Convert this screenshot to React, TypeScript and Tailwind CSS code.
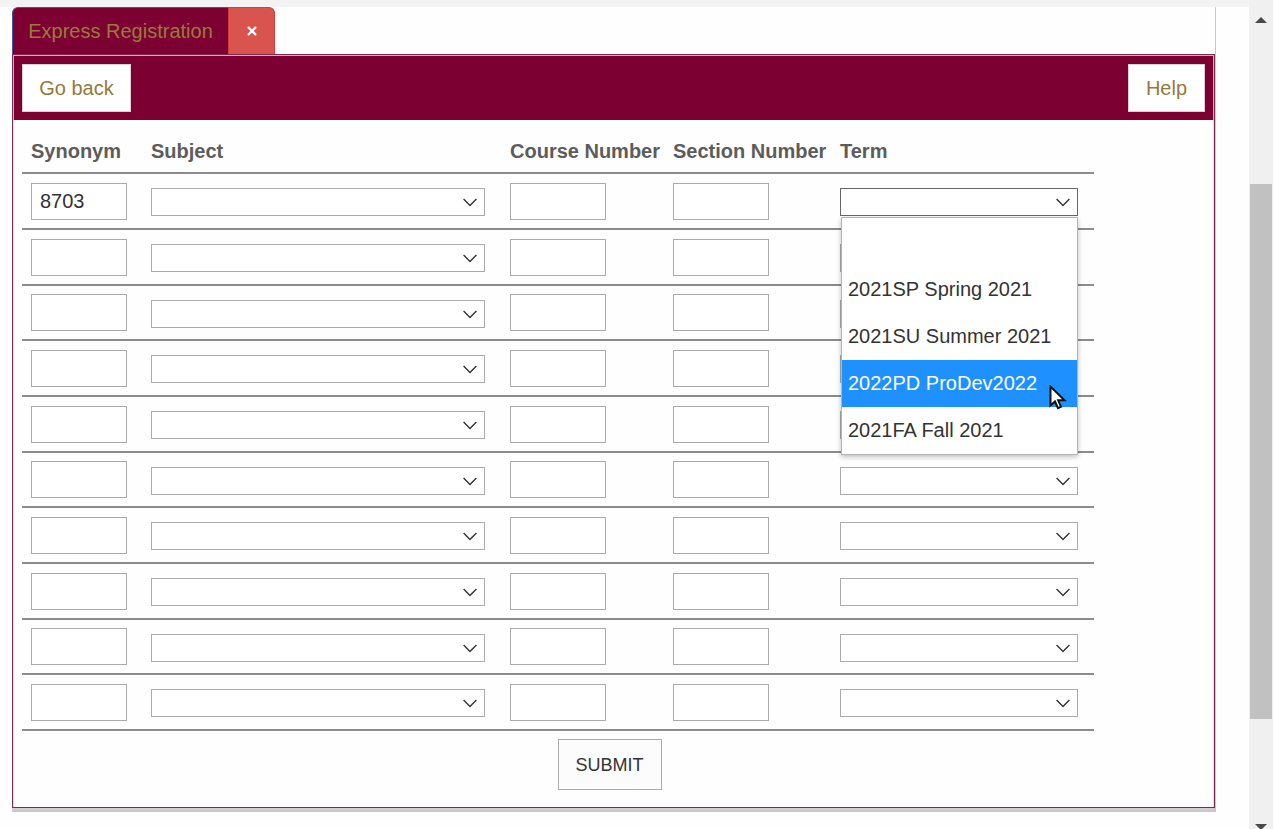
import type { ReactNode } from "react";

const terms = ["", "2021SP Spring 2021", "2021SU Summer 2021", "2022PD ProDev2022", "2021FA Fall 2021"];
const highlighted = 3;
const rows = Array.from({ length: 10 }, (_, i) => i + 1);

function TextBox({ label, value = "" }: { label: string; value?: string }) {
  return (
    <input
      type="text"
      aria-label={label}
      defaultValue={value}
      className="block h-[37px] w-24 border border-[#ababab] bg-white px-2 text-xl text-[#333] outline-none"
    />
  );
}

function DropDown({ label, open = false, options = [""], children }: { label: string; open?: boolean; options?: string[]; children?: ReactNode }) {
  return (
    <div className="relative">
      <select
        aria-label={label}
        className={`block h-7 w-full appearance-none border bg-white px-2 text-base leading-none outline-none ${open ? "border-[#666]" : "border-[#ababab]"}`}
      >
        {options.map((o) => (
          <option key={o}>{o}</option>
        ))}
      </select>
      <svg viewBox="0 0 14 9" className="pointer-events-none absolute top-[10px] right-2 h-[9px] w-[14px]" fill="none" stroke="#333" strokeWidth="1.4">
        <path d="M0.6 1 L7 7.6 L13.4 1" />
      </svg>
      {children}
    </div>
  );
}

function TermMenu() {
  return (
    <ul
      role="listbox"
      aria-label="Terms"
      className="absolute top-[29px] right-0 left-px z-10 grid h-[238px] grid-rows-5 border border-[#b4b4b4] bg-white text-xl text-[#333] shadow-[0_2px_5px_rgba(0,0,0,0.25)]"
    >
      {terms.map((t, i) => (
        <li
          key={t}
          role="option"
          aria-selected={i === highlighted}
          className={`relative flex items-center px-[6px] whitespace-nowrap ${i === highlighted ? "bg-[#1e90ff] text-white" : ""}`}
        >
          {t}
          {i === highlighted && (
            <svg viewBox="0 0 18 25" className="absolute top-[25px] right-[10px] h-[25px] w-[18px]">
              <path d="M1.5 1.5 V20.5 L6 16.5 L9 23.2 L12 21.8 L9.2 15.3 H15.5 Z" fill="#fff" stroke="#111" strokeWidth="2" />
            </svg>
          )}
        </li>
      ))}
    </ul>
  );
}

function CourseTable() {
  const head = "border-b-2 border-[#8c8c8c] pt-[2px] pr-0 pl-[9px] text-left font-bold whitespace-nowrap text-[#5c5c5c]";
  const cell = "h-14 border-b-2 border-[#8c8c8c] py-0 pr-0 pl-[9px] align-middle group-nth-[3n]:h-[55px]";
  return (
    <table className="w-[1072px] table-fixed border-separate border-spacing-0 text-xl">
      <thead>
        <tr className="h-[46px]">
          <th className={`w-[120px] ${head}`}>Synonym</th>
          <th className={`w-[359px] ${head}`}>Subject</th>
          <th className={`w-[163px] ${head}`}>Course Number</th>
          <th className={`w-[167px] ${head}`}>Section Number</th>
          <th className={head}>Term</th>
        </tr>
      </thead>
      <tbody>
        {rows.map((n) => (
          <tr key={n} className="group">
            <td className={cell}><TextBox label={`Synonym ${n}`} value={n === 1 ? "8703" : ""} /></td>
            <td className={cell}><div className="w-[334px] pt-[2px]"><DropDown label={`Subject ${n}`} /></div></td>
            <td className={cell}><TextBox label={`Course number ${n}`} /></td>
            <td className={cell}><TextBox label={`Section number ${n}`} /></td>
            <td className={cell}>
              <div className="w-[238px] pt-[2px]">
                <DropDown label={`Term ${n}`} open={n === 1} options={terms}>
                  {n === 1 && <TermMenu />}
                </DropDown>
              </div>
            </td>
          </tr>
        ))}
      </tbody>
    </table>
  );
}

function ScrollBar() {
  return (
    <aside aria-hidden="true" className="flex w-6 shrink-0 flex-col items-center bg-[#f0f0f0]">
      <svg viewBox="0 0 12 6" className="mt-[17px] h-[6px] w-3"><path d="M6 0 L12 6 H0 Z" fill="#484848" /></svg>
      <div className="mt-[161px] h-[535px] w-[22px] bg-[#c1c1c1]" />
      <svg viewBox="0 0 12 6" className="mt-auto -mb-px h-[6px] w-3"><path d="M0 0 H12 L6 6 Z" fill="#484848" /></svg>
    </aside>
  );
}

export default function App() {
  return (
    <div className="flex min-h-screen overflow-hidden bg-[#fefefe] pr-px font-['Liberation_Sans',Arial,sans-serif]">
      <div className="flex-1">
        <div className="h-[7px] bg-[#f3f3f3]" />
        <main className="mr-[33px] ml-3 border-r border-b-2 border-[#c8c8c8]">
          <nav className="flex h-[47px] text-xl">
            <button className="w-[216px] rounded-tl-md border-t border-l border-[#3c5c96] bg-[#7d0033] pb-px text-center text-[#9c7a3c]">Express Registration</button>
            <button aria-label="Close tab" className="flex w-[47px] items-center justify-center rounded-tr-md border border-b-0 border-[#d43f3a] bg-[#d9534f]">
              <svg viewBox="0 0 10 10" className="h-[10px] w-[10px]" stroke="#fff" strokeWidth="2.4"><path d="M1 1 L9 9 M9 1 L1 9" /></svg>
            </button>
          </nav>
          <div className="border-b-2 border-[#dcc8d0]">
            <section className="border border-[#7d2a50]">
              <header className="flex h-[65px] items-center justify-between border border-b-0 border-[#dba6bd] bg-[#7d0033] px-2 text-xl text-[#94793a]">
                <button className="h-12 w-[109px] border border-[#dccfd4] bg-white">Go back</button>
                <button className="h-12 w-[77px] border border-[#dccfd4] bg-white">Help</button>
              </header>
              <div className="border-x border-[#eed8e1] px-2 pt-2 pb-[17px]">
                <CourseTable />
                <div className="flex w-[1072px] justify-center pt-2 pl-[103px]">
                  <button className="h-[51px] w-[104px] border border-[#ababab] bg-[#fcfcfc] text-lg text-[#333]">SUBMIT</button>
                </div>
              </div>
            </section>
          </div>
        </main>
      </div>
      <ScrollBar />
    </div>
  );
}
